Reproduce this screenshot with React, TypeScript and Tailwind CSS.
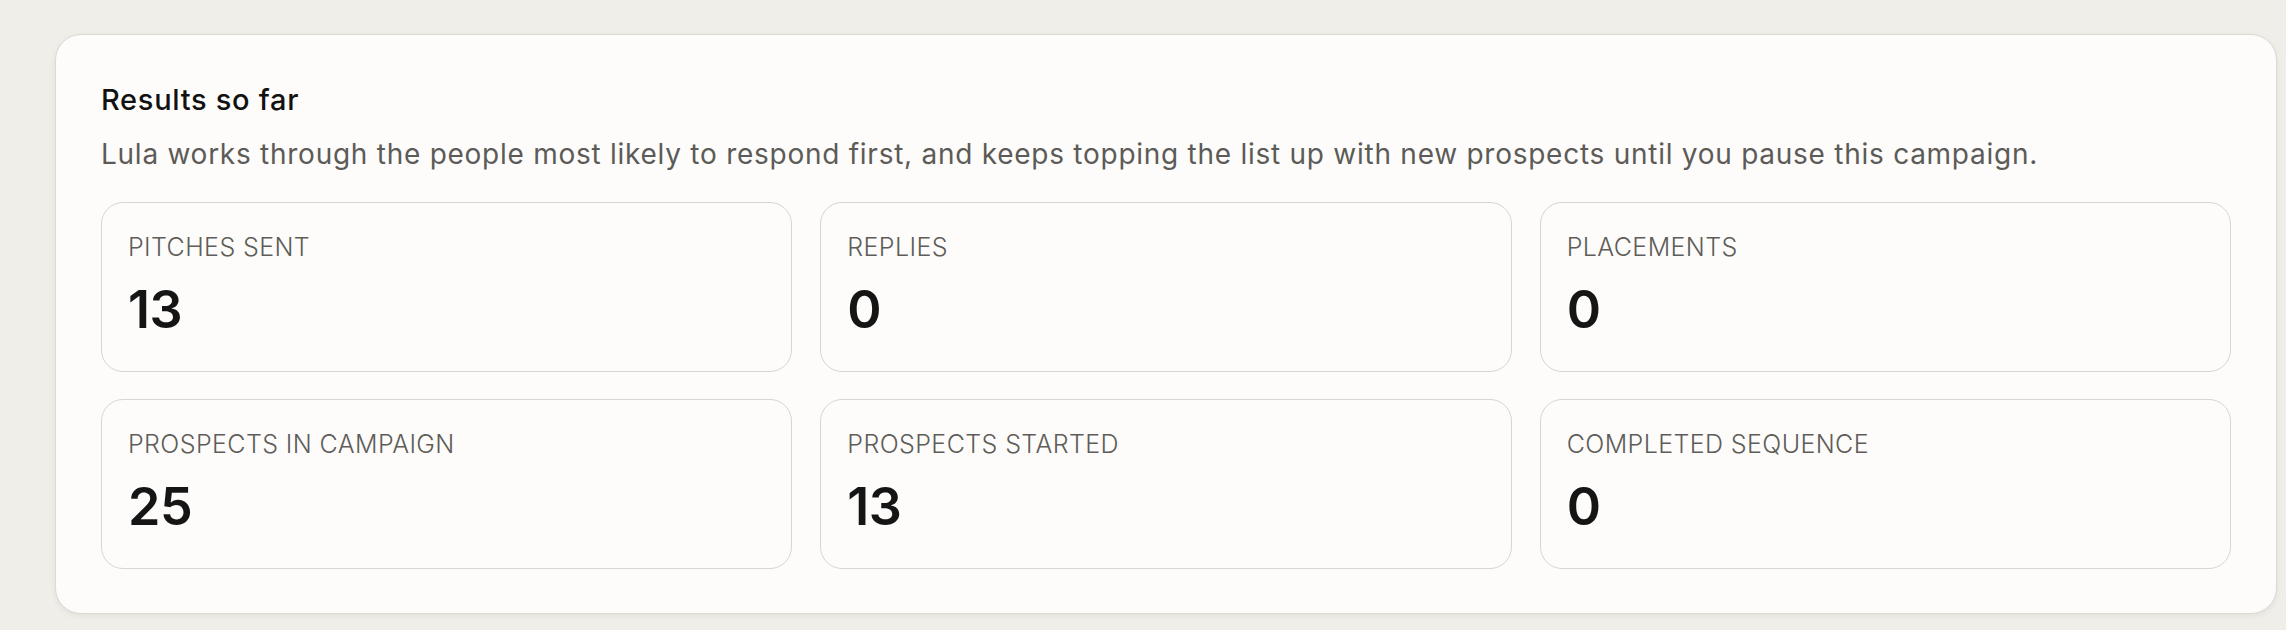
import React from 'react';

const STATS = [
  { label: 'Pitches sent', value: 13 },
  { label: 'Replies', value: 0 },
  { label: 'Placements', value: 0 },
  { label: 'Prospects in campaign', value: 25 },
  { label: 'Prospects started', value: 13 },
  { label: 'Completed sequence', value: 0 },
];

const App: React.FC = () => {
  return (
    <div
      className="w-[2286px] h-[630px] overflow-hidden bg-[#efeee9] pt-[34px] pl-[55px]"
      style={{ fontFamily: 'Inter, "Noto Sans", sans-serif' }}
    >
      <div className="w-[2222px] rounded-[26px] border border-[#dbd9d1] bg-[#fdfcfa] px-[45px] pt-[47px] pb-[44px] shadow-[0_2px_6px_rgba(0,0,0,0.06)]">
        <h2 className="text-[29px] leading-[36px] font-medium tracking-[0.7px] text-[#121212]">Results so far</h2>
        <p className="mt-[18px] text-[28px] leading-[36px] tracking-[0.74px] text-[#5c5b57]">
          Lula works through the people most likely to respond first, and keeps topping the list up with new prospects until you pause this campaign.
        </p>

        <div className="mt-[30px] grid grid-cols-3 gap-x-[28px] gap-y-[27px]">
          {STATS.map(stat => (
            <div
              key={stat.label}
              className="rounded-[22px] border border-[#d8d6ce] bg-[#fdfcfa] px-[26px] pt-[28px] pb-[31px]"
            >
              <div className="text-[25px] leading-[32px] font-light uppercase tracking-[0.4px] text-[#5e5d59]">{stat.label}</div>
              <div className="mt-[17px] text-[52px] leading-[60px] font-semibold tracking-[-0.5px] text-[#151515]">{stat.value}</div>
            </div>
          ))}
        </div>
      </div>
    </div>
  );
};

export default App;
